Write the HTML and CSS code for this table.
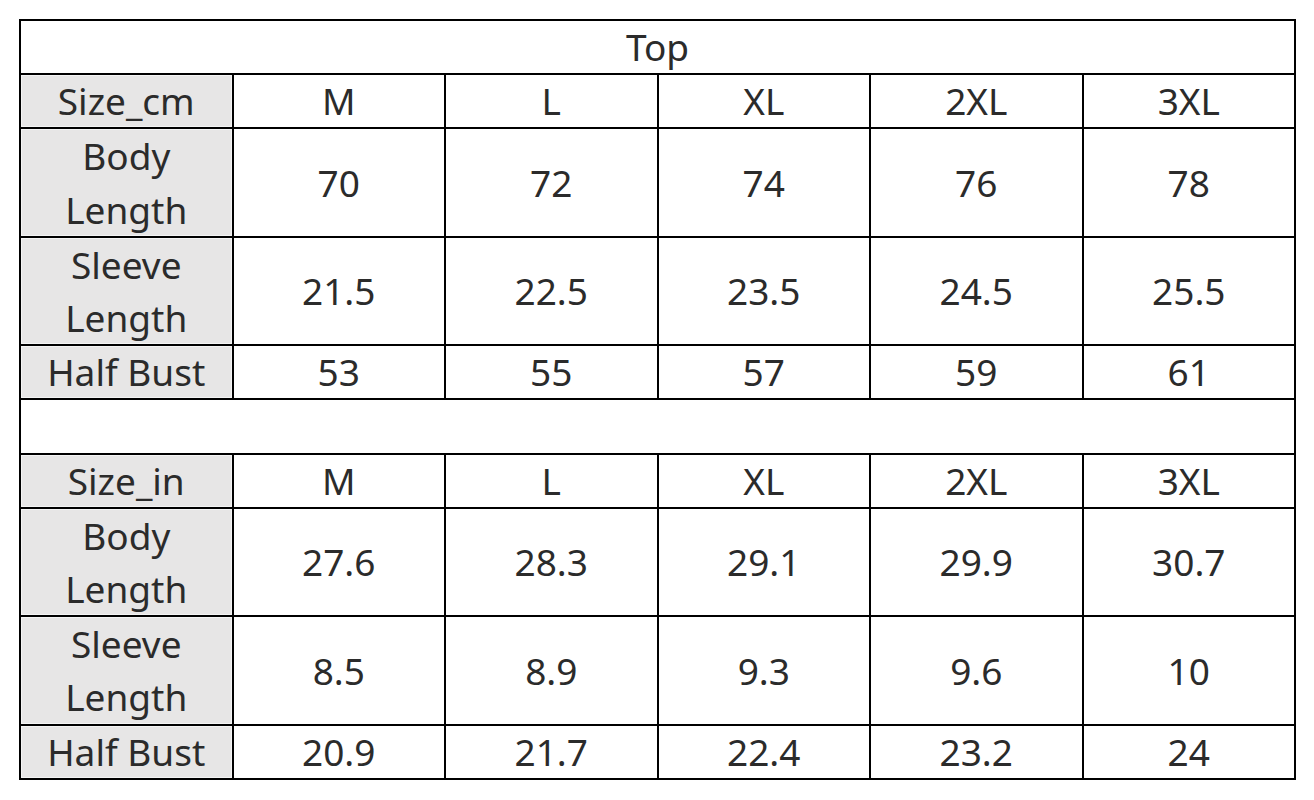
FILE: index.html
```html
<!DOCTYPE html>
<html>
<head>
<meta charset="utf-8">
<link rel="stylesheet" href="styles.css">
</head>
<body>
<table class="size-table">
  <colgroup>
    <col class="c"><col class="c"><col class="c"><col class="c"><col class="c"><col class="c">
  </colgroup>
  <tr class="r1"><td colspan="6" class="title">Top</td></tr>
  <tr class="r1"><td class="head">Size_cm</td><td>M</td><td>L</td><td>XL</td><td>2XL</td><td>3XL</td></tr>
  <tr class="r2"><td class="head">Body<br>Length</td><td>70</td><td>72</td><td>74</td><td>76</td><td>78</td></tr>
  <tr class="r2"><td class="head">Sleeve<br>Length</td><td>21.5</td><td>22.5</td><td>23.5</td><td>24.5</td><td>25.5</td></tr>
  <tr class="r1"><td class="head">Half Bust</td><td>53</td><td>55</td><td>57</td><td>59</td><td>61</td></tr>
  <tr class="r1"><td colspan="6"></td></tr>
  <tr class="r1"><td class="head">Size_in</td><td>M</td><td>L</td><td>XL</td><td>2XL</td><td>3XL</td></tr>
  <tr class="r2"><td class="head">Body<br>Length</td><td>27.6</td><td>28.3</td><td>29.1</td><td>29.9</td><td>30.7</td></tr>
  <tr class="r2"><td class="head">Sleeve<br>Length</td><td>8.5</td><td>8.9</td><td>9.3</td><td>9.6</td><td>10</td></tr>
  <tr class="r1"><td class="head">Half Bust</td><td>20.9</td><td>21.7</td><td>22.4</td><td>23.2</td><td>24</td></tr>
</table>
</body>
</html>
```

FILE: styles.css
```css
html, body {
  margin: 0;
  padding: 0;
  background: #ffffff;
}
body {
  padding: 19px 0 0 19px;
}
.size-table {
  border-collapse: collapse;
  table-layout: fixed;
  width: 1275px;
  font-family: "Noto Sans", "Open Sans", sans-serif;
  font-size: 37px;
  color: #2b2b2b;
}
.size-table .c {
  width: 212.5px;
}
.size-table td {
  border: 2px solid #000;
  text-align: center;
  vertical-align: middle;
  padding: 0;
}
.size-table tr.r1 td {
  height: 52.2px;
  line-height: 52px;
}
.size-table tr.r2 td {
  height: 106.4px;
  line-height: 53.2px;
}
.size-table td.head {
  background: #e7e6e6;
  box-shadow: inset 0 0 0 1px #f4f4f4;
}
```
